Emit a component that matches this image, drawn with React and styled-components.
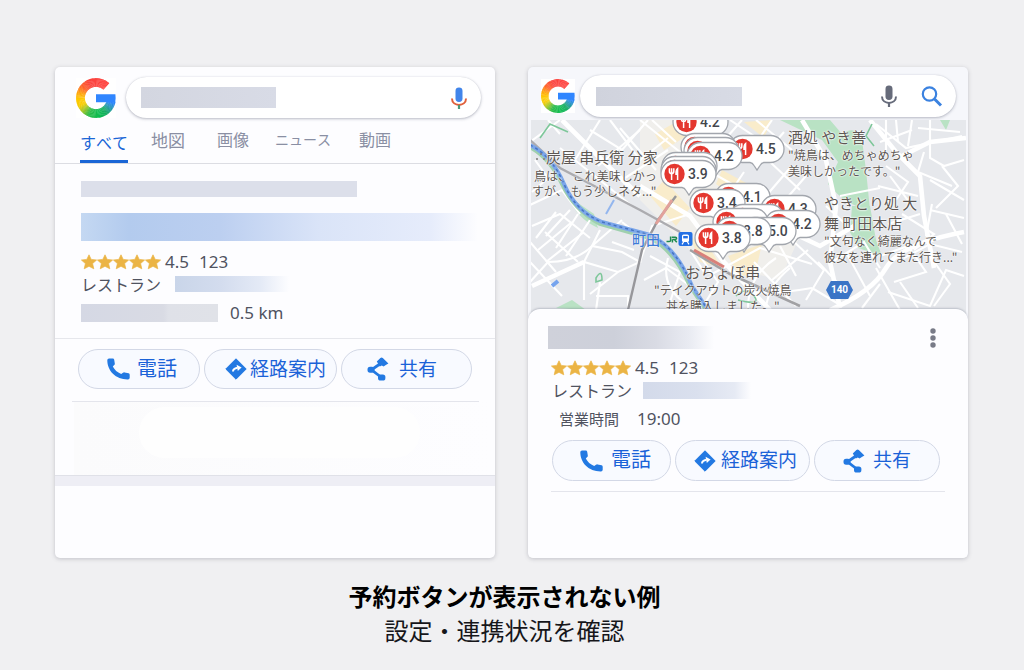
import React from "react";
import styled, { createGlobalStyle, css } from "styled-components";

const GlobalStyle = createGlobalStyle`
  *, *::before, *::after { box-sizing: border-box; }
  body {
    margin: 0;
    background: #f0f0f2;
    color: #4a4d59;
    font-family: "Noto Sans", "Noto Sans CJK JP", sans-serif;
  }
  h1, p { margin: 0; font-weight: 400; }
  button, input { font: inherit; color: inherit; }
  svg { display: block; }
`;

/* ---------- page ---------- */

const Page = styled.main`
  padding: 67px 56px 24px 55px;
`;

const Columns = styled.div`
  display: grid;
  grid-template-columns: 1fr 1fr;
  gap: 33px;
`;

const Card = styled.section`
  display: flex;
  flex-direction: column;
  min-width: 0;
  overflow: hidden;
  border-radius: 5px;
  background: ${(p) => p.$tint || "#fdfdff"};
  box-shadow: 0 1px 4px rgba(60, 60, 80, 0.26);
`;

const Caption = styled.footer`
  padding: 21px 14px 0 0;
  text-align: center;
  font-family: "Noto Sans CJK JP", sans-serif;
  font-size: 24px;
  line-height: 34px;
  color: #16161a;
`;

const CaptionTitle = styled.p`
  && { font-weight: 700; color: #000; }
`;

/* ---------- search header ---------- */

const Header = styled.header`
  display: flex;
  align-items: center;
  gap: ${(p) => (p.$compact ? 5 : 10)}px;
  padding: ${(p) => (p.$compact ? "8px 12px 3px 13px" : "10px 14px 0 21px")};
`;

const LogoTile = styled.div`
  width: ${(p) => p.$size}px;
  flex: none;
  background: #fff;
`;

const SearchForm = styled.form`
  display: flex;
  flex: 1;
  align-items: center;
  min-width: 0;
  height: ${(p) => (p.$compact ? 42 : 41)}px;
  padding: 0 ${(p) => (p.$compact ? 12 : 10)}px 0 ${(p) => (p.$compact ? 16 : 15)}px;
  border-radius: 21px;
  background: #fff;
  box-shadow: 0 1px 3px rgba(70, 75, 100, 0.36), 0 0 1px rgba(70, 75, 100, 0.2);
`;

const SearchInput = styled.input`
  flex: 1;
  min-width: 0;
  border: 0;
  outline: 0;
  background: transparent;
`;

const IconButton = styled.button`
  display: grid;
  place-items: center;
  width: 24px;
  height: 24px;
  flex: none;
  padding: 0;
  border: 0;
  background: none;
  margin-left: ${(p) => p.$gap || 0}px;
`;

const Redacted = styled.span`
  display: block;
  flex: none;
  width: ${(p) => p.$w};
  height: ${(p) => p.$h}px;
  background: ${(p) => p.$fill};
`;

/* ---------- tabs ---------- */

const Tabs = styled.nav`
  display: grid;
  grid-template-columns: 71px 66px 58px 84px auto;
  height: 46px;
  padding-left: 25px;
  border-bottom: 1px solid #dcdde3;
`;

const Tab = styled.a`
  justify-self: start;
  height: 45px;
  color: #8a8fa3;
  font-family: "Noto Sans CJK JP", sans-serif;
  font-size: ${(p) => p.$size || 16}px;
  font-kerning: none;
  line-height: 43px;
  text-decoration: none;
  ${(p) =>
    p.$active &&
    css`
      border-bottom: 3px solid #1a66d6;
      color: #1a66d6;
      line-height: 48px;
    `}
`;

/* ---------- place details ---------- */

const Details = styled.div`
  display: flex;
  flex-direction: column;
  padding: 17px 17px 14px 26px;
  border-bottom: 1px solid #e6e7ec;
`;

const Line = styled.div`
  display: flex;
  align-items: center;
  height: ${(p) => p.$h}px;
  gap: ${(p) => p.$gap || 0}px;
  padding-left: ${(p) => p.$indent || 0}px;
  margin-top: ${(p) => p.$top || 0}px;
`;

const Value = styled.span`
  font-family: ${(p) => (p.$jp ? `"Noto Sans CJK JP"` : `"Noto Sans"`)}, sans-serif;
  font-size: ${(p) => p.$size || 17}px;
  line-height: 22px;
  color: #50535f;
  white-space: nowrap;
`;

const StarRow = styled.span`
  display: flex;
  margin-right: 4px;
`;

const Actions = styled.div`
  display: grid;
  grid-template-columns: ${(p) => p.$cols};
  gap: 4px;
  padding: ${(p) => p.$pad};
`;

const ActionButton = styled.button`
  display: flex;
  align-items: center;
  min-width: 0;
  height: ${(p) => p.$h}px;
  gap: ${(p) => p.$gap}px;
  padding: 0 0 0 ${(p) => p.$start}px;
  border: 1px solid #d3d8e6;
  border-radius: 21px;
  background: #f8faff;
  color: #1b62d8;
  font-family: "Noto Sans CJK JP", sans-serif;
  font-size: ${(p) => p.$size}px;
  line-height: 36px;
  white-space: nowrap;
  svg { flex: none; }
  span { padding-bottom: 3px; }
`;

const Rule = styled.hr`
  width: auto;
  height: 1px;
  margin: ${(p) => p.$margin};
  border: 0;
  background: #e4e5ec;
`;

const EmptyPanel = styled.div`
  height: 73px;
  margin-left: 19px;
  padding: 5px 75px 17px 65px;
  background: linear-gradient(90deg, #fbfbfc, #fdfdff);
`;

const EmptyPill = styled.div`
  height: 51px;
  border-radius: 26px;
  background: #fefefe;
`;

const Band = styled.div`
  height: 11px;
  margin-bottom: 72px;
  border-top: 1px solid #e0e1e8;
  background: #eeeef5;
`;

const Sheet = styled.div`
  position: relative;
  margin: -11px 0 0;
  padding-bottom: 66px;
  border-radius: 12px 12px 0 0;
  background: #fdfdff;
  box-shadow: 0 -1px 2px rgba(90, 95, 120, 0.3);
`;

const SheetBody = styled.div`
  padding: 16px 23px 0 20px;
`;

const SheetTop = styled.div`
  display: flex;
  align-items: center;
  justify-content: space-between;
  height: 25px;
`;

/* ---------- map ---------- */

const MapBox = styled.div`
  position: relative;
  height: 200px;
  margin: 0 2px 0 3px;
  overflow: hidden;
  background: #e6e8ec;
`;

const Roads = styled.svg`
  width: 100%;
  height: 100%;
`;

const MapLabel = styled.div`
  position: absolute;
  left: ${(p) => p.$x}px;
  top: ${(p) => p.$y}px;
  color: #5d5753;
  font-family: "Noto Sans CJK JP", sans-serif;
  font-size: 12px;
  line-height: 16px;
  text-align: ${(p) => p.$align || "left"};
  white-space: nowrap;
  text-shadow: 0 0 2px #fff, 0 0 2px #fff, 0 0 1px #fff;
`;

const MapTitle = styled.div`
  font-size: 15px;
  line-height: 20px;
`;

const Station = styled.div`
  position: absolute;
  left: 101px;
  top: 109px;
  display: flex;
  align-items: center;
  gap: 6px;
  color: #3f7bd6;
  font-family: "Noto Sans CJK JP", sans-serif;
  font-size: 14px;
  font-weight: 500;
  line-height: 20px;
  text-shadow: 0 0 2px #fff, 0 0 1px #fff;
`;

const PinBox = styled.div`
  position: absolute;
  left: ${(p) => p.$x}px;
  top: ${(p) => p.$y}px;
  width: 58px;
  height: 38px;
  svg { position: absolute; inset: 0; }
`;

const PinScore = styled.span`
  position: absolute;
  left: 28px;
  top: 5px;
  color: #44464c;
  font-family: Roboto, sans-serif;
  font-size: 14px;
  font-weight: 500;
  line-height: 20px;
`;

const Shield = styled.div`
  position: absolute;
  left: 295px;
  top: 161px;
  width: 27px;
  height: 18px;
  clip-path: polygon(18% 0, 82% 0, 100% 50%, 82% 100%, 18% 100%, 0 50%);
  background: #3a74c6;
  color: #fff;
  font-family: Roboto, sans-serif;
  font-size: 10px;
  font-weight: 700;
  line-height: 18px;
  text-align: center;
`;

/* ---------- drawings ---------- */

const HUES = [
  [-42, 255, 70, 66],
  [20, 250, 66, 62],
  [50, 255, 100, 40],
  [72, 255, 165, 14],
  [92, 255, 200, 0],
  [115, 246, 205, 8],
  [135, 150, 196, 40],
  [155, 40, 186, 70],
  [190, 12, 188, 80],
  [215, 24, 172, 100],
  [235, 36, 150, 180],
  [252, 46, 134, 250],
  [276, 48, 134, 255],
];

function hueAt(a) {
  for (let i = 1; i < HUES.length; i++) {
    if (a <= HUES[i][0]) {
      const [a0, ...c0] = HUES[i - 1];
      const [a1, ...c1] = HUES[i];
      const t = (a - a0) / (a1 - a0);
      return `rgb(${c0.map((v, k) => Math.round(v + (c1[k] - v) * t)).join(",")})`;
    }
  }
  return "rgb(48,134,255)";
}

// Angles run counter-clockwise from twelve o'clock.
function GLogo({ size }) {
  const at = (deg) => {
    const r = (deg * Math.PI) / 180;
    return `${(20 - 15.5 * Math.sin(r)).toFixed(2)} ${(20 - 15.5 * Math.cos(r)).toFixed(2)}`;
  };
  const arcs = [];
  for (let a = -42; a < 258; a += 3) {
    arcs.push(
      <path
        key={a}
        d={`M${at(a)}A15.5 15.5 0 0 0 ${at(Math.min(a + 4, 262))}`}
        stroke={hueAt(a)}
      />
    );
  }
  return (
    <svg width={size} height={size} viewBox="0 0 40 40" role="img" aria-label="Google">
      <g fill="none" strokeWidth="8.8">{arcs}</g>
      <path d="M20 16.2H39.4Q40 20 39.2 24.2H20Z" fill="#3086ff" />
    </svg>
  );
}

const Mic = ({ body, arc, stem }) => (
  <svg width="18" height="24" viewBox="0 0 18 24" aria-hidden="true">
    <rect x="5.5" y="1.5" width="7" height="14.5" rx="3.4" fill={body} />
    <path d="M2 12.5C2 21 16 21 16 12.5" fill="none" stroke={arc} strokeWidth="2" />
    <path d="M9 19V23" stroke={stem} strokeWidth="2.2" />
  </svg>
);

const Magnifier = () => (
  <svg width="24" height="24" viewBox="0 0 24 24" aria-hidden="true">
    <circle cx="9.5" cy="10" r="6.7" fill="none" stroke="#3b82e0" strokeWidth="2.2" />
    <path d="M14.5 15L21 21.5" stroke="#3b82e0" strokeWidth="3" />
  </svg>
);

const Stars = () => (
  <StarRow role="img" aria-label="4.5">
    {[0, 1, 2, 3, 4].map((i) => (
      <svg key={i} width="16" height="16" viewBox="0 0 16 16">
        <path
          d="M8 .8L10.2 5.4L15.6 6L11.6 9.6L12.8 14.8L8 12.3L3.2 14.8L4.4 9.6L.4 6L5.8 5.4Z"
          fill="#ebb445"
          stroke="#ebb445"
          strokeWidth=".7"
          strokeLinejoin="round"
        />
      </svg>
    ))}
  </StarRow>
);

const Phone = () => (
  <svg width="23" height="22" viewBox="0 0 23 22" aria-hidden="true">
    <path
      d="M.3 2Q.4.5 2 .5H5.8Q7 .5 7.2 1.7L7.8 5.4Q8 6.4 7.2 7.1L5.8 8.6C7.6 12 10.2 14.4 14.2 16L16 14.8Q16.7 14.2 17.6 14.4L21.6 15.3Q22.7 15.6 22.7 16.7V19.8Q22.6 21.3 21 21.4C9 21.6.2 13 .3 2Z"
      fill="#2379e2"
    />
  </svg>
);

const Directions = () => (
  <svg width="22" height="22" viewBox="0 0 22 22" aria-hidden="true">
    <path d="M11 .8L21.2 11L11 21.2L.8 11Z" fill="#2379e2" stroke="#2379e2" strokeLinejoin="round" />
    <path d="M8 13.6Q8 10.6 12.4 9.8" fill="none" stroke="#fff" strokeWidth="2" />
    <path d="M11.6 6.8L16.6 9.6L12.8 13Z" fill="#fff" />
  </svg>
);

const Share = () => (
  <svg width="22" height="24" viewBox="0 0 22 24" aria-hidden="true">
    <path d="M15 5.5L4.5 12.8L14.5 20.5" fill="none" stroke="#2379e2" strokeWidth="2.8" />
    <rect x=".5" y="9.7" width="7" height="6" rx="2.6" fill="#2379e2" />
    <rect x="11" y="17.6" width="7.4" height="6" rx="2.6" fill="#2379e2" />
    <path d="M9.8 4.6L13.4 1Q14.6 .2 15.8 1L21.4 6.4L18.8 8L16.6 9.6L14.8 8.4L12.8 9.6Z" fill="#2379e2" />
  </svg>
);

const Dots = () => (
  <svg width="6" height="20" viewBox="0 0 6 20" aria-hidden="true">
    <g fill="#787b87">
      <circle cx="3" cy="3" r="2.7" />
      <circle cx="3" cy="10" r="2.7" />
      <circle cx="3" cy="17" r="2.7" />
    </g>
  </svg>
);

function Pin({ x, y, score }) {
  return (
    <PinBox $x={x} $y={y}>
      <svg width="58" height="38" viewBox="0 0 58 38" aria-hidden="true">
        <path
          d="M14.5 1.5H42.5A13.5 13.5 0 0 1 42.5 28.5H36Q33.5 28.8 32 31.5L29 36L26 31.5Q24.5 28.8 22 28.5H14.5A13.5 13.5 0 0 1 14.5 1.5Z"
          fill="#fff"
          stroke="#a2a6ad"
          strokeWidth="1.3"
        />
        <circle cx="14.5" cy="15" r="10.2" fill="#e4372f" />
        <path
          d="M9.4 9.2V12.2Q9.4 14.6 11.6 14.6Q13.8 14.6 13.8 12.2V9.2M11.6 9.2V21M17.6 21V9.6Q15.8 11 16 15.2H17.6"
          fill="none"
          stroke="#fff"
          strokeWidth="1.5"
        />
      </svg>
      {score && <PinScore>{score}</PinScore>}
    </PinBox>
  );
}

// Pins without a score lie almost wholly under their neighbours.
const PINS = [
  [141, -13, "4.2"],
  [197, 14, "4.5"],
  [149, 12],
  [152, 16],
  [155, 21, "4.2"],
  [130, 31],
  [129, 35],
  [129, 39, "3.9"],
  [183, 62, "4.1"],
  [158, 68, "3.4"],
  [229, 74, "4.3"],
  [197, 83],
  [181, 87],
  [233, 89, "4.2"],
  [209, 96, "5.0"],
  [184, 96, "3.8"],
  [163, 103, "3.8"],
];

const MINOR = [
  "M530 142L560 120M535 160L548 178L532 192M548 120L560 134M530 205L562 190L580 214",
  "M575 160L600 120M560 148L632 206M590 130L622 150L648 120M610 120L640 160L668 138",
  "M598 166L640 130M625 178L668 150M640 120L690 160M620 128L656 170M652 120L676 142",
  "M532 226L560 214L590 238M538 250L572 222M546 262L584 232M556 212L536 238M530 262L562 296",
  "M570 210L546 236M578 214L556 248M590 220L566 256M530 242L556 272M545 232L578 262",
  "M530 282L548 262Q576 262 592 246L622 252L640 262L618 272L584 262V300",
  "M584 262L600 230M592 246L622 220M612 242L634 250M618 272L590 294M596 296H628V310M600 282L596 310",
  "M640 262L652 226L690 214M622 222L640 236M650 256L680 272L668 308M644 280L666 268L690 286",
  "M668 258Q660 286 686 304M690 250L704 272M700 256L718 282L702 308",
  "M730 120L760 140L748 160M742 120L728 136M756 120L792 150M772 120L754 146M784 132L760 160",
  "M700 166L760 200M744 172L716 214M770 162L800 190M790 168L766 196M806 176L780 206",
  "M712 274L760 248L812 264M748 308Q748 276 776 258M766 308Q768 286 790 268M736 290Q766 296 812 288",
  "M780 246L796 276M792 240L824 270L806 300M754 262L796 306M808 250L772 280M812 288L842 306",
  "M876 124L906 148L962 136M886 120V150M896 120L898 142M912 120L908 146M918 128L960 132M880 142L912 130",
  "M930 120V158L944 166L964 160M924 152L918 172L952 186M942 166L958 186L936 208M930 180L964 200",
  "M886 166L908 182L896 200M878 186L918 196M890 176L912 206M930 210L964 218",
  "M902 214L934 234L914 250M888 224L920 214M932 204L926 236M946 214L962 244",
  "M840 196L880 188M826 206L854 232M832 262L864 242L880 268M846 252L870 296M818 262L850 296",
  "M880 256L908 246L926 272L894 282M904 258L930 244L962 252M888 292L930 306L946 270L964 276",
  "M900 282L918 308M930 256L950 284L934 306M876 268L900 310M862 308L880 284",
];

const MAJOR = [
  "M562 120L610 168L640 196",
  "M640 186L690 216L724 262L770 310",
  "M802 120L826 160L836 206L830 262L840 308",
  "M870 120L896 152L920 176L924 216L934 268",
  "M902 156L930 142L966 138",
  "M736 206L820 246L854 226",
  "M830 310Q872 292 886 268T964 232",
  "M532 286L584 262",
];

const CityMap = () => (
  <Roads viewBox="531 120 435 200" preserveAspectRatio="xMidYMin slice" aria-hidden="true">
    <path d="M640 120H690L740 200L800 236L780 280L700 260L640 200Z" fill="#f0efec" />
    <g fill="#f9eccb">
      <path d="M655 134L676 122L690 134L664 150Z" />
      <path d="M664 180L690 208L676 226L650 196Z" />
      <path d="M722 170L748 184L738 200L716 184Z" />
      <path d="M728 256L762 244L756 270L740 278Z" />
      <path d="M690 236L712 252L722 268L700 262Z" />
      <path d="M744 122L772 120L764 138Z" />
    </g>
    <g fill="#b9e2c4">
      <path d="M780 120H830L842 134Q856 124 862 140L866 170L870 210Q846 206 828 184L838 162L822 140Z" />
      <path d="M852 206H870L876 240L882 256L858 248L850 232Z" />
      <path d="M556 308L572 300L586 310Z" />
      <path d="M568 196Q576 218 598 228L594 214Z" />
      <path d="M940 120H950L946 130Z" />
    </g>
    <g fill="none" stroke="#fff" strokeWidth="2.1">
      {MINOR.map((d) => <path key={d} d={d} />)}
    </g>
    <g fill="none" stroke="#fff" strokeWidth="4.6">
      {MAJOR.map((d) => <path key={d} d={d} />)}
    </g>
    <g fill="none" stroke="#7ec79a" strokeWidth="1.6">
      <path d="M540 138L550 124L568 132M872 124L866 136L874 146M596 278Q602 268 602 280L596 282Z" />
      <path d="M736 296Q746 286 754 296T738 300" />
    </g>
    <path d="M530 140L560 168L640 210L680 232" fill="none" stroke="#acacb0" strokeWidth="2.4" />
    <path d="M676 196L658 220L642 250L628 310" fill="none" stroke="#97979b" strokeWidth="2.4" />
    <path d="M690 250L730 274L800 306" fill="none" stroke="#a1a1a4" strokeWidth="2.6" />
    <path d="M694 250L724 267" stroke="#d9807a" strokeWidth="3" />
    <path d="M656 224L672 200" stroke="#e2a19b" strokeWidth="3" />
    <path
      d="M530 147Q550 158 562 184T600 224L650 238Q674 250 690 286L706 310"
      fill="none"
      stroke="#9fd0ae"
      strokeWidth="4"
    />
    <path
      d="M530 145Q552 156 564 184T602 222L650 235Q676 247 692 286L708 310"
      fill="none"
      stroke="#7ba6ea"
      strokeWidth="4"
    />
    <path
      d="M530 145Q552 156 564 184T602 222L650 235Q676 247 692 286L708 310"
      fill="none"
      stroke="#4775c0"
      strokeWidth="1.5"
      strokeDasharray="3 3"
    />
    <path d="M552 286L558 281" stroke="#76a4ee" strokeWidth="4" />
    <path d="M606 214L614 200" stroke="#93b6ee" strokeWidth="2" />
    <g fill="#85817f">
      <circle cx="541" cy="154" r="1.1" />
      <circle cx="537" cy="159" r="1.1" />
      <circle cx="544" cy="159" r="1.1" />
    </g>
  </Roads>
);

const StationIcons = () => (
  <svg width="27" height="16" viewBox="0 0 27 16" aria-hidden="true">
    <path
      d="M.5 10.6H3.2Q4.6 10.6 4.6 9.2V5.4M6.4 11.5V8.6M5.8 6.2H9.4Q10.6 6.2 10.6 7.2T9.4 8.4H6.4M8.4 8.4L10.8 11.2"
      fill="none"
      stroke="#1c8a4e"
      strokeWidth="1.5"
    />
    <rect x="12.5" y="1" width="14" height="14" rx="2" fill="#2470e4" />
    <rect x="16" y="3.4" width="7" height="7.6" rx="1.6" fill="#fff" />
    <rect x="17.2" y="5" width="4.6" height="2.4" fill="#2470e4" />
    <path d="M17.6 11L16 13.4M21.4 11L23 13.4" stroke="#fff" strokeWidth="1.2" />
  </svg>
);

/* ---------- cards ---------- */

function ActionRow({ pad, cols, height, items }) {
  return (
    <Actions $pad={pad} $cols={cols}>
      {items.map(({ label, icon, start, gap, size }) => (
        <ActionButton
          key={label}
          type="button"
          $h={height}
          $start={start}
          $gap={gap}
          $size={size}
        >
          {icon}
          <span>{label}</span>
        </ActionButton>
      ))}
    </Actions>
  );
}

function Rating({ top, indent }) {
  return (
    <Line $h={22} $top={top} $indent={indent}>
      <Stars />
      <Line $h={22} $gap={10}>
        <Value>4.5</Value>
        <Value>123</Value>
      </Line>
    </Line>
  );
}

function SearchCard() {
  return (
    <Card>
      <Header>
        <LogoTile $size={40}><GLogo size={40} /></LogoTile>
        <SearchForm role="search">
          <Redacted $w="135px" $h={21} $fill="linear-gradient(90deg, #d3d6e0, #d8dbe6)" />
          <SearchInput type="text" aria-label="検索" />
          <IconButton type="button" aria-label="音声検索">
            <Mic body="#4285ea" arc="#e0603c" stem="#4c9a78" />
          </IconButton>
        </SearchForm>
      </Header>
      <Tabs>
        <Tab href="#all" $active>すべて</Tab>
        <Tab href="#maps" $size={17}>地図</Tab>
        <Tab href="#images">画像</Tab>
        <Tab href="#news" $size={14}>ニュース</Tab>
        <Tab href="#videos">動画</Tab>
      </Tabs>
      <Details>
        <Redacted $w="276px" $h={16} $fill="#dcdfea" />
        <Line $h={28} $top={16}>
          <Redacted
            $w="100%"
            $h={28}
            $fill="linear-gradient(90deg, #c4d8f2 0%, #b3cbee 12%, #bccff0 35%, #dae4f8 60%, #e6ecfb 88%, #fdfdff 100%)"
          />
        </Line>
        <Rating top={10} />
        <Line $h={22} $gap={14}>
          <Value $jp $size={16}>レストラン</Value>
          <Redacted $w="114px" $h={16} $fill="linear-gradient(90deg, #c9d5e9, #d3dcee 40%, #e4eaf6 75%, #fdfdff)" />
        </Line>
        <Line $h={22} $gap={12} $top={7}>
          <Redacted $w="137px" $h={18} $fill="linear-gradient(90deg, #d5d8e4, #d9dbe4 60%, #dfe1e8 64%, #e0e2e8)" />
          <Value>0.5 km</Value>
        </Line>
      </Details>
      <ActionRow
        pad="10px 23px 12px"
        cols="122fr 133fr 131fr"
        height={40}
        items={[
          { label: "電話", icon: <Phone />, start: 28, gap: 7, size: 20 },
          { label: "経路案内", icon: <Directions />, start: 20, gap: 3, size: 19 },
          { label: "共有", icon: <Share />, start: 25, gap: 10, size: 19 },
        ]}
      />
      <Rule $margin="0 16px 0 17px" />
      <EmptyPanel><EmptyPill /></EmptyPanel>
      <Band />
    </Card>
  );
}

function MapCard() {
  return (
    <Card $tint="#f6f7fb">
      <Header $compact>
        <LogoTile $size={34}><GLogo size={34} /></LogoTile>
        <SearchForm $compact role="search">
          <Redacted $w="146px" $h={19} $fill="linear-gradient(90deg, #d0d3dd, #d8dbe5)" />
          <SearchInput type="text" aria-label="検索" />
          <IconButton type="button" aria-label="音声検索">
            <Mic body="#666b7a" arc="#666b7a" stem="#666b7a" />
          </IconButton>
          <IconButton aria-label="検索する" $gap={19}>
            <Magnifier />
          </IconButton>
        </SearchForm>
      </Header>
      <MapBox>
        <CityMap />
        <MapLabel $x={15} $y={27}>
          <MapTitle>炭屋 串兵衛 分家</MapTitle>
        </MapLabel>
        <MapLabel $x={3} $y={48}>鳥は、 これ美味しかっ</MapLabel>
        <MapLabel $x={1} $y={63}>すが、 もう少しネタ..."</MapLabel>
        <MapLabel $x={257} $y={7}>
          <MapTitle>酒処 やき善</MapTitle>
          "焼鳥は、めちゃめちゃ<br />美味しかったです。"
        </MapLabel>
        <MapLabel $x={293} $y={73}>
          <MapTitle>やきとり処 大</MapTitle>
          <MapTitle>舞 町田本店</MapTitle>
          "文句なく綺麗なんで<br />彼女を連れてまた行き..."
        </MapLabel>
        <MapLabel $x={123} $y={142} $align="center">
          <MapTitle>おちょぼ串</MapTitle>
          "テイクアウトの炭火焼鳥<br />丼を購入しました。"
        </MapLabel>
        <Station>町田<StationIcons /></Station>
        <Shield>140</Shield>
        {PINS.map(([x, y, score]) => (
          <Pin key={`${x}-${y}`} x={x} y={y} score={score} />
        ))}
      </MapBox>
      <Sheet>
        <SheetBody>
          <SheetTop>
            <Redacted
              $w="166px"
              $h={23}
              $fill="linear-gradient(90deg, #cfd1da, #cdd0da 40%, #d9dbe4 65%, #e9ebf2 85%, #fdfdff)"
            />
            <IconButton type="button" aria-label="メニュー"><Dots /></IconButton>
          </SheetTop>
          <Rating top={7} indent={3} />
          <Line $h={22} $gap={11} $indent={4}>
            <Value $jp $size={16}>レストラン</Value>
            <Redacted $w="108px" $h={17} $fill="linear-gradient(90deg, #d3daea, #dae0ee 50%, #e6eaf4 85%, #fdfdff)" />
          </Line>
          <Line $h={22} $gap={18} $indent={11} $top={7}>
            <Value $jp $size={15}>営業時間</Value>
            <Value>19:00</Value>
          </Line>
        </SheetBody>
        <ActionRow
          pad="10px 28px 10px 24px"
          cols="119fr 135fr 126fr"
          height={41}
          items={[
            { label: "電話", icon: <Phone />, start: 27, gap: 8, size: 20 },
            { label: "経路案内", icon: <Directions />, start: 18, gap: 5, size: 19 },
            { label: "共有", icon: <Share />, start: 28, gap: 8, size: 19 },
          ]}
        />
        <Rule $margin="0 23px" />
      </Sheet>
    </Card>
  );
}

export default function App() {
  return (
    <>
      <GlobalStyle />
      <Page>
        <Columns>
          <SearchCard />
          <MapCard />
        </Columns>
        <Caption>
          <CaptionTitle>予約ボタンが表示されない例</CaptionTitle>
          <p>設定・連携状況を確認</p>
        </Caption>
      </Page>
    </>
  );
}
